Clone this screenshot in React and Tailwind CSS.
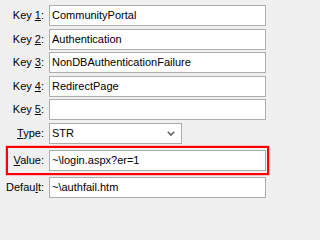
import React from "react";

const font = { fontFamily: '"Liberation Sans", Arial, sans-serif' };

const Label = ({ pre, u, post }) => (
  <div className="w-[44px] shrink-0 text-right text-[11px] text-black">
    {pre}
    <span className="underline underline-offset-[1px]">{u}</span>
    {post}
  </div>
);

const Field = ({ value }) => (
  <div className="ml-[5px] flex h-[21px] w-[217px] shrink-0 items-center border border-[#adadad] bg-white px-[2px] text-[11px] text-black">
    {value}
  </div>
);

const Row = ({ label, value, className = "" }) => (
  <div className={`flex items-center ${className}`}>
    <Label {...label} />
    <Field value={value} />
  </div>
);

export default function App() {
  const keys = [
    ["1", "CommunityPortal"],
    ["2", "Authentication"],
    ["3", "NonDBAuthenticationFailure"],
    ["4", "RedirectPage"],
    ["5", ""],
  ];

  return (
    <div className="min-h-screen w-full bg-[#f0f0f0]" style={font}>
      <div className="w-[271px] pt-[5px]">
        <div className="flex flex-col gap-[2.5px]">
          {keys.map(([n, v]) => (
            <Row key={n} label={{ pre: "Key ", u: n, post: ":" }} value={v} />
          ))}
          <div className="flex items-center">
            <Label pre="" u="T" post="ype:" />
            <div className="ml-[5px] flex h-[21px] w-[133px] items-center justify-between border border-[#adadad] bg-white pl-[2px] pr-[6px] text-[11px] text-black">
              STR
              <svg width="8" height="5" viewBox="0 0 8 5" className="mt-[1px]">
                <path d="M0.8 0.8 L4 4 L7.2 0.8" fill="none" stroke="#606060" strokeWidth="1.6" />
              </svg>
            </div>
          </div>
        </div>
        <div className="ml-[6px] mr-[2px] mt-[2.5px] flex items-center border-2 border-[#ff0000] py-[2px] shadow-[0_0_0_0.5px_#ff9090]">
          <div className="-ml-[8px] flex items-center">
            <Label pre="" u="V" post="alue:" />
            <Field value="~\login.aspx?er=1" />
          </div>
        </div>
        <Row className="mt-[1.5px]" label={{ pre: "Defau", u: "l", post: "t:" }} value="~\authfail.htm" />
      </div>
    </div>
  );
}
